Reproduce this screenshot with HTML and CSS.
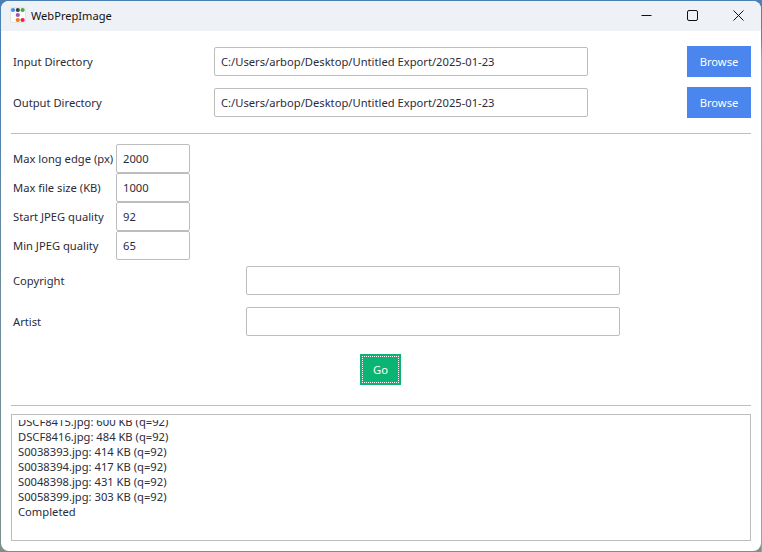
FILE: index.html
```html
<!DOCTYPE html>
<html lang="en">
<head>
<meta charset="utf-8">
<title>WebPrepImage</title>
<link rel="stylesheet" href="styles.css">
</head>
<body>
<div class="window">
  <header class="titlebar">
    <svg class="app-icon" width="16" height="16" viewBox="0 0 16 16">
      <rect x="0.5" y="0.5" width="15" height="15" rx="1.5" fill="#fbfbfb" stroke="#e4e4e4"/>
      <circle cx="3" cy="3" r="2.1" fill="#3f8fe8"/>
      <circle cx="7.8" cy="3" r="2.1" fill="#3a3f4a"/>
      <circle cx="12.6" cy="3" r="2.1" fill="#3fae3a"/>
      <circle cx="7.8" cy="8" r="2.1" fill="#9b59b6"/>
      <circle cx="7.8" cy="13" r="2.1" fill="#f07a1a"/>
      <circle cx="12.6" cy="13" r="2.1" fill="#ee1f4b"/>
    </svg>
    <span class="app-title">WebPrepImage</span>
    <div class="controls">
      <span class="control">
        <svg width="11" height="11" viewBox="0 0 11 11"><path d="M0.5 5.5h10" stroke="#111" fill="none"/></svg>
      </span>
      <span class="control">
        <svg width="11" height="11" viewBox="0 0 11 11"><rect x="0.5" y="0.5" width="10" height="10" rx="1.5" stroke="#111" fill="none"/></svg>
      </span>
      <span class="control">
        <svg width="11" height="11" viewBox="0 0 11 11"><path d="M0.5 0.5l10 10M10.5 0.5l-10 10" stroke="#111" fill="none"/></svg>
      </span>
    </div>
  </header>
  <main class="content">
    <section class="dirs">
      <label class="label">Input Directory</label>
      <input class="field" type="text" value="C:/Users/arbop/Desktop/Untitled Export/2025-01-23">
      <button class="browse">Browse</button>
      <label class="label">Output Directory</label>
      <input class="field" type="text" value="C:/Users/arbop/Desktop/Untitled Export/2025-01-23">
      <button class="browse">Browse</button>
    </section>
    <hr class="rule rule-dirs">
    <section class="numbers">
      <label class="label">Max long edge (px)</label><input class="num" type="text" value="2000">
      <label class="label">Max file size (KB)</label><input class="num" type="text" value="1000">
      <label class="label">Start JPEG quality</label><input class="num" type="text" value="92">
      <label class="label">Min JPEG quality</label><input class="num" type="text" value="65">
    </section>
    <section class="meta">
      <label class="label">Copyright</label><input class="field" type="text">
      <label class="label">Artist</label><input class="field" type="text">
    </section>
    <div class="go-row"><button class="go"><span class="go-focus">Go</span></button></div>
    <hr class="rule rule-log">
    <div class="log">
      <div class="log-scroll">
        <div>DSCF8415.jpg: 600 KB (q=92)</div>
        <div>DSCF8416.jpg: 484 KB (q=92)</div>
        <div>S0038393.jpg: 414 KB (q=92)</div>
        <div>S0038394.jpg: 417 KB (q=92)</div>
        <div>S0048398.jpg: 431 KB (q=92)</div>
        <div>S0058399.jpg: 303 KB (q=92)</div>
        <div>Completed</div>
      </div>
    </div>
  </main>
</div>
</body>
</html>
```
FILE: styles.css
```css
* { box-sizing: border-box; }
html, body { margin: 0; height: 100%; }
body {
  background:
    linear-gradient(180deg, #4c80b4 0, #5f86a8 40px, #a4a8aa 60px, #a0a0a0 100%) right top / 1px 100% no-repeat,
    linear-gradient(180deg, #4c80b4 0, #4c80b4 60px, #6c8a9a 300px, #7d8f8c 100%);
  padding: 1px 1px 1px 1px;
  font-family: "Noto Sans", "Open Sans", sans-serif;
  font-size: 11.2px;
  color: #2b2b3a;
  overflow: hidden;
}
.window {
  height: 100%;
  background: #fff;
  border-radius: 8px;
  display: flex;
  flex-direction: column;
  overflow: hidden;
}
.titlebar {
  height: 30px;
  flex: none;
  background: #eef2f6;
  display: flex;
  align-items: center;
  padding-left: 9px;
}
.app-icon { flex: none; margin-bottom: 2px; }
.app-title { margin-left: 5px; margin-bottom: 2px; font-size: 11.1px; color: #111; }
.controls { margin-left: auto; display: flex; align-self: flex-start; }
.control { width: 46px; height: 28px; display: flex; align-items: center; justify-content: center; }
.content { padding: 15px 10px 0; flex: 1; display: flex; flex-direction: column; }
.label { padding-left: 2px; }
.dirs {
  display: grid;
  grid-template-columns: 203px 374px 1fr 64px;
  grid-auto-rows: 31px;
  row-gap: 10px;
  align-items: center;
}
.dirs .browse { grid-column: 4; }
.dirs .label { grid-column: 1; }
.field {
  height: 29px;
  border: 1px solid #bdbdbd;
  border-radius: 2px;
  padding: 0 6px;
  font: inherit;
  color: #2b2b3a;
  background: #fff;
  width: 100%;
  outline: none;
}
.browse {
  height: 31px;
  border: 0;
  background: #4a86ee;
  color: #fff;
  font: inherit;
  padding: 0;
}
.rule { border: 0; border-top: 1px solid #bdbdbd; margin: 0; }
.rule-dirs { margin-top: 15px; }
.numbers {
  margin-top: 10px;
  display: grid;
  grid-template-columns: 105px 74px;
  grid-auto-rows: 29px;
  align-items: center;
}
.num {
  height: 29px;
  width: 74px;
  border: 1px solid #bdbdbd;
  border-radius: 2px;
  padding: 0 6px;
  font: inherit;
  color: #2b2b3a;
  outline: none;
}
.meta {
  margin-top: 6px;
  display: grid;
  grid-template-columns: 235px 374px;
  grid-auto-rows: 29px;
  row-gap: 12px;
  align-items: center;
}
.go-row { margin-top: 18px; display: flex; padding-left: 349px; }
.go {
  width: 41px;
  height: 31px;
  border: 0;
  padding: 2px;
  background: #0ab574;
  color: #fff;
  font: inherit;
}
.go-focus {
  display: flex;
  align-items: center;
  justify-content: center;
  height: 100%;
  border: 1px dotted #fff;
}
.rule-log { margin-top: 20px; }
.log {
  margin-top: 8px;
  height: 127px;
  border: 1px solid #bdbdbd;
  padding: 0 6px 21px;
  display: flex;
  flex-direction: column;
  line-height: 15px;
}
.log-scroll { flex: 1; min-height: 0; overflow: hidden; display: flex; flex-direction: column; justify-content: flex-end; margin-top: 5px; }
```
